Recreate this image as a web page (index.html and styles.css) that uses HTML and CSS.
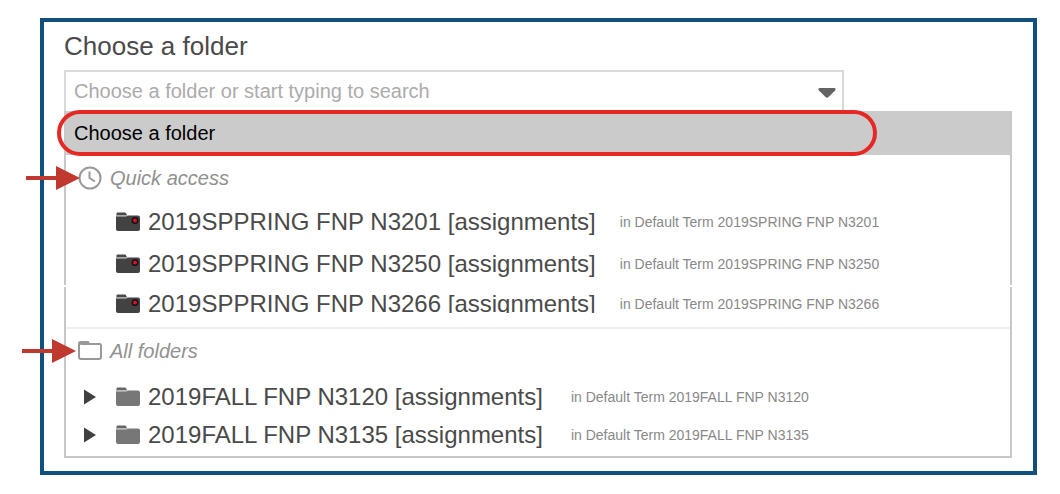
FILE: index.html
```html
<!DOCTYPE html>
<html lang="en">
<head>
    <meta charset="UTF-8">
    <meta name="viewport" content="width=device-width, initial-scale=1.0">
    <title>Choose a folder</title>
    <link rel="stylesheet" href="styles.css">
</head>
<body>
    <!-- Shared icons -->
    <svg class="sprite" aria-hidden="true">
        <symbol id="icon-rec-folder" viewBox="0 0 24 20">
            <path d="M0.500 3V1.500Q0.500 0.500 1.500 0.500h8L11 3z" fill="#4a4a4a"/>
            <path d="M0 3h11v1.500H0z" fill="#aaa"/>
            <path d="M0 4.500h10.500l1-1H22a2 2 0 0 1 2 2V17a2 2 0 0 1-2 2H2a2 2 0 0 1-2-2z" fill="#424242"/>
            <circle cx="19" cy="8.500" r="3.500" fill="#161010"/>
            <circle cx="19" cy="8.500" r="2" fill="#d8102c"/>
        </symbol>
        <symbol id="icon-folder" viewBox="0 0 24 20">
            <path d="M0.500 3V1.500Q0.500 0.500 1.500 0.500h8L11 3z" fill="#666"/>
            <path d="M0 3h11v1.500H0z" fill="#bbb"/>
            <path d="M0 4.500h10.500l1-1H22a2 2 0 0 1 2 2V17a2 2 0 0 1-2 2H2a2 2 0 0 1-2-2z" fill="#777"/>
        </symbol>
        <symbol id="icon-pointer" viewBox="0 0 54 24">
            <path d="M0 10h30V0l24 12-24 12V14H0z" fill="#c0392e"/>
        </symbol>
    </svg>

    <main class="frame">
        <label class="title" for="folder-search">Choose a folder</label>

        <div class="combo">
            <input class="combo-input" id="folder-search" type="text" placeholder="Choose a folder or start typing to search">
            <button class="combo-toggle" type="button" aria-label="Show folders">
                <svg width="18" height="10" viewBox="0 0 18 10"><path d="M2 0h14q2 0 1.500 1.500-.5 1.500-2 2.500l-5 5q-1.500 1.500-3 0l-5-5q-1.500-1-2-2.500Q0 0 2 0z" fill="#636363"/></svg>
            </button>
        </div>

        <div class="panel panel-top">
            <div class="selected">
                <button class="selected-option" type="button">Choose a folder</button>
                <span class="highlight"></span>
            </div>
            <h2 class="group quick">
                <svg class="pointer"><use href="#icon-pointer"/></svg>
                <svg class="group-icon" viewBox="0 0 24 24" fill="none" stroke="#999" stroke-width="2"><circle cx="12" cy="12" r="10.500"/><path d="M11.500 5.500v6.500l5.500 3.500"/></svg>
                Quick access
            </h2>
            <button class="folder" type="button">
                <svg class="folder-icon"><use href="#icon-rec-folder"/></svg>
                <span class="name">2019SPPRING FNP N3201 [assignments]</span>
                <span class="term">in Default Term 2019SPRING FNP N3201</span>
            </button>
            <button class="folder" type="button">
                <svg class="folder-icon"><use href="#icon-rec-folder"/></svg>
                <span class="name">2019SPPRING FNP N3250 [assignments]</span>
                <span class="term">in Default Term 2019SPRING FNP N3250</span>
            </button>
        </div>

        <div class="panel panel-bottom">
            <button class="folder cut" type="button">
                <svg class="folder-icon"><use href="#icon-rec-folder"/></svg>
                <span class="name">2019SPPRING FNP N3266 [assignments]</span>
                <span class="term">in Default Term 2019SPRING FNP N3266</span>
            </button>
            <h2 class="group all">
                <svg class="pointer"><use href="#icon-pointer"/></svg>
                <svg class="group-icon" viewBox="0 0 24 24" fill="none" stroke="#999" stroke-width="2"><path d="M2.500 5H22Q23 5 23 6.500V18q0 2-2 2H3q-2 0-2-2V4.500Q1 3 2.500 3H10l1 2"/><path d="M2 4h9" stroke-width="3"/></svg>
                All folders
            </h2>
            <div class="tree">
                <div class="branch">
                    <button class="expand" type="button" aria-label="Expand 2019FALL FNP N3120"><svg width="12" height="16" viewBox="0 0 12 16"><path d="M0 0.500 12 8 0 15.500z" fill="#404040"/></svg></button>
                    <button class="folder" type="button">
                        <svg class="folder-icon"><use href="#icon-folder"/></svg>
                        <span class="name">2019FALL FNP N3120 [assignments]</span>
                        <span class="term">in Default Term 2019FALL FNP N3120</span>
                    </button>
                </div>
                <div class="branch">
                    <button class="expand" type="button" aria-label="Expand 2019FALL FNP N3135"><svg width="12" height="16" viewBox="0 0 12 16"><path d="M0 0.500 12 8 0 15.500z" fill="#404040"/></svg></button>
                    <button class="folder" type="button">
                        <svg class="folder-icon"><use href="#icon-folder"/></svg>
                        <span class="name">2019FALL FNP N3135 [assignments]</span>
                        <span class="term">in Default Term 2019FALL FNP N3135</span>
                    </button>
                </div>
            </div>
        </div>
    </main>
</body>
</html>
```
FILE: styles.css
```css
* {
    box-sizing: border-box;
}

body {
    margin: 0;
    padding: 18px 23px 19px 40px;
    background: #fff;
    color: #4a4a4a;
    font-family: "Liberation Sans", Arial, sans-serif;
}

button,
input {
    margin: 0;
    padding: 0;
    border: 0;
    background: none;
    color: inherit;
    font-family: inherit;
    text-align: left;
}

.sprite {
    display: none;
}

.frame {
    padding: 10px 21px 13px 20px;
    border: 4px solid #114f7d;
}

.title {
    display: block;
    margin-bottom: 10px;
    font-size: 26px;
    line-height: 28px;
}

/* Search box */
.combo {
    display: flex;
    align-items: center;
    width: calc(100% - 168px);
    height: 41px;
    border: 2px solid #d9d9d9;
    border-bottom: 0;
}

.combo-input {
    flex: 1;
    padding-left: 8px;
    font-size: 20px;
    outline: none;
}

.combo-input::placeholder {
    color: #ababab;
    opacity: 1;
}

.combo-toggle {
    display: flex;
    padding: 2px 6px 0;
}

/* Dropdown */
.panel {
    border: 2px solid #c8c8c8;
}

.panel-top {
    border-top: 0;
    border-bottom: 0;
    margin-bottom: 2px;
}

.panel-bottom {
    border-top: 0;
}

.selected {
    position: relative;
    background: #cbcbcb;
}

.selected-option {
    display: block;
    width: 100%;
    padding-left: 8px;
    color: #000;
    font-size: 20px;
    line-height: 44px;
}

.highlight {
    position: absolute;
    top: -1px;
    bottom: -1px;
    left: -9px;
    right: 133px;
    border: 4px solid #e52823;
    border-radius: 23px;
    pointer-events: none;
}

.group {
    position: relative;
    display: flex;
    align-items: center;
    gap: 8px;
    height: 46px;
    margin: 0;
    padding-left: 12px;
    color: #919191;
    font-size: 20px;
    font-style: italic;
    font-weight: 400;
}

.group-icon {
    width: 24px;
    height: 24px;
}

.pointer {
    position: absolute;
    top: 50%;
    width: 54px;
    height: 24px;
    margin-top: -12px;
}

.quick .pointer {
    left: -40px;
}

.all .pointer {
    left: -44px;
}

.all {
    border-top: 2px solid #eee;
}

.folder {
    display: flex;
    align-items: center;
    width: 100%;
    height: 42px;
    padding-left: 50px;
}

.folder-icon {
    width: 24px;
    height: 20px;
    margin-right: 8px;
}

.name {
    margin-right: 24px;
    font-size: 24px;
    line-height: 28px;
}

.term {
    color: #888;
    font-size: 14px;
}

.cut {
    height: 40px;
    padding-bottom: 6px;
}

.cut .name {
    overflow: hidden;
    line-height: 18px;
}

.tree {
    padding: 5px 0 2px;
}

.branch {
    display: flex;
    align-items: center;
    padding-left: 18px;
}

.branch .folder {
    height: 38px;
    padding-left: 20px;
}

.branch .name {
    margin-right: 28px;
}

.expand {
    display: flex;
}
```
